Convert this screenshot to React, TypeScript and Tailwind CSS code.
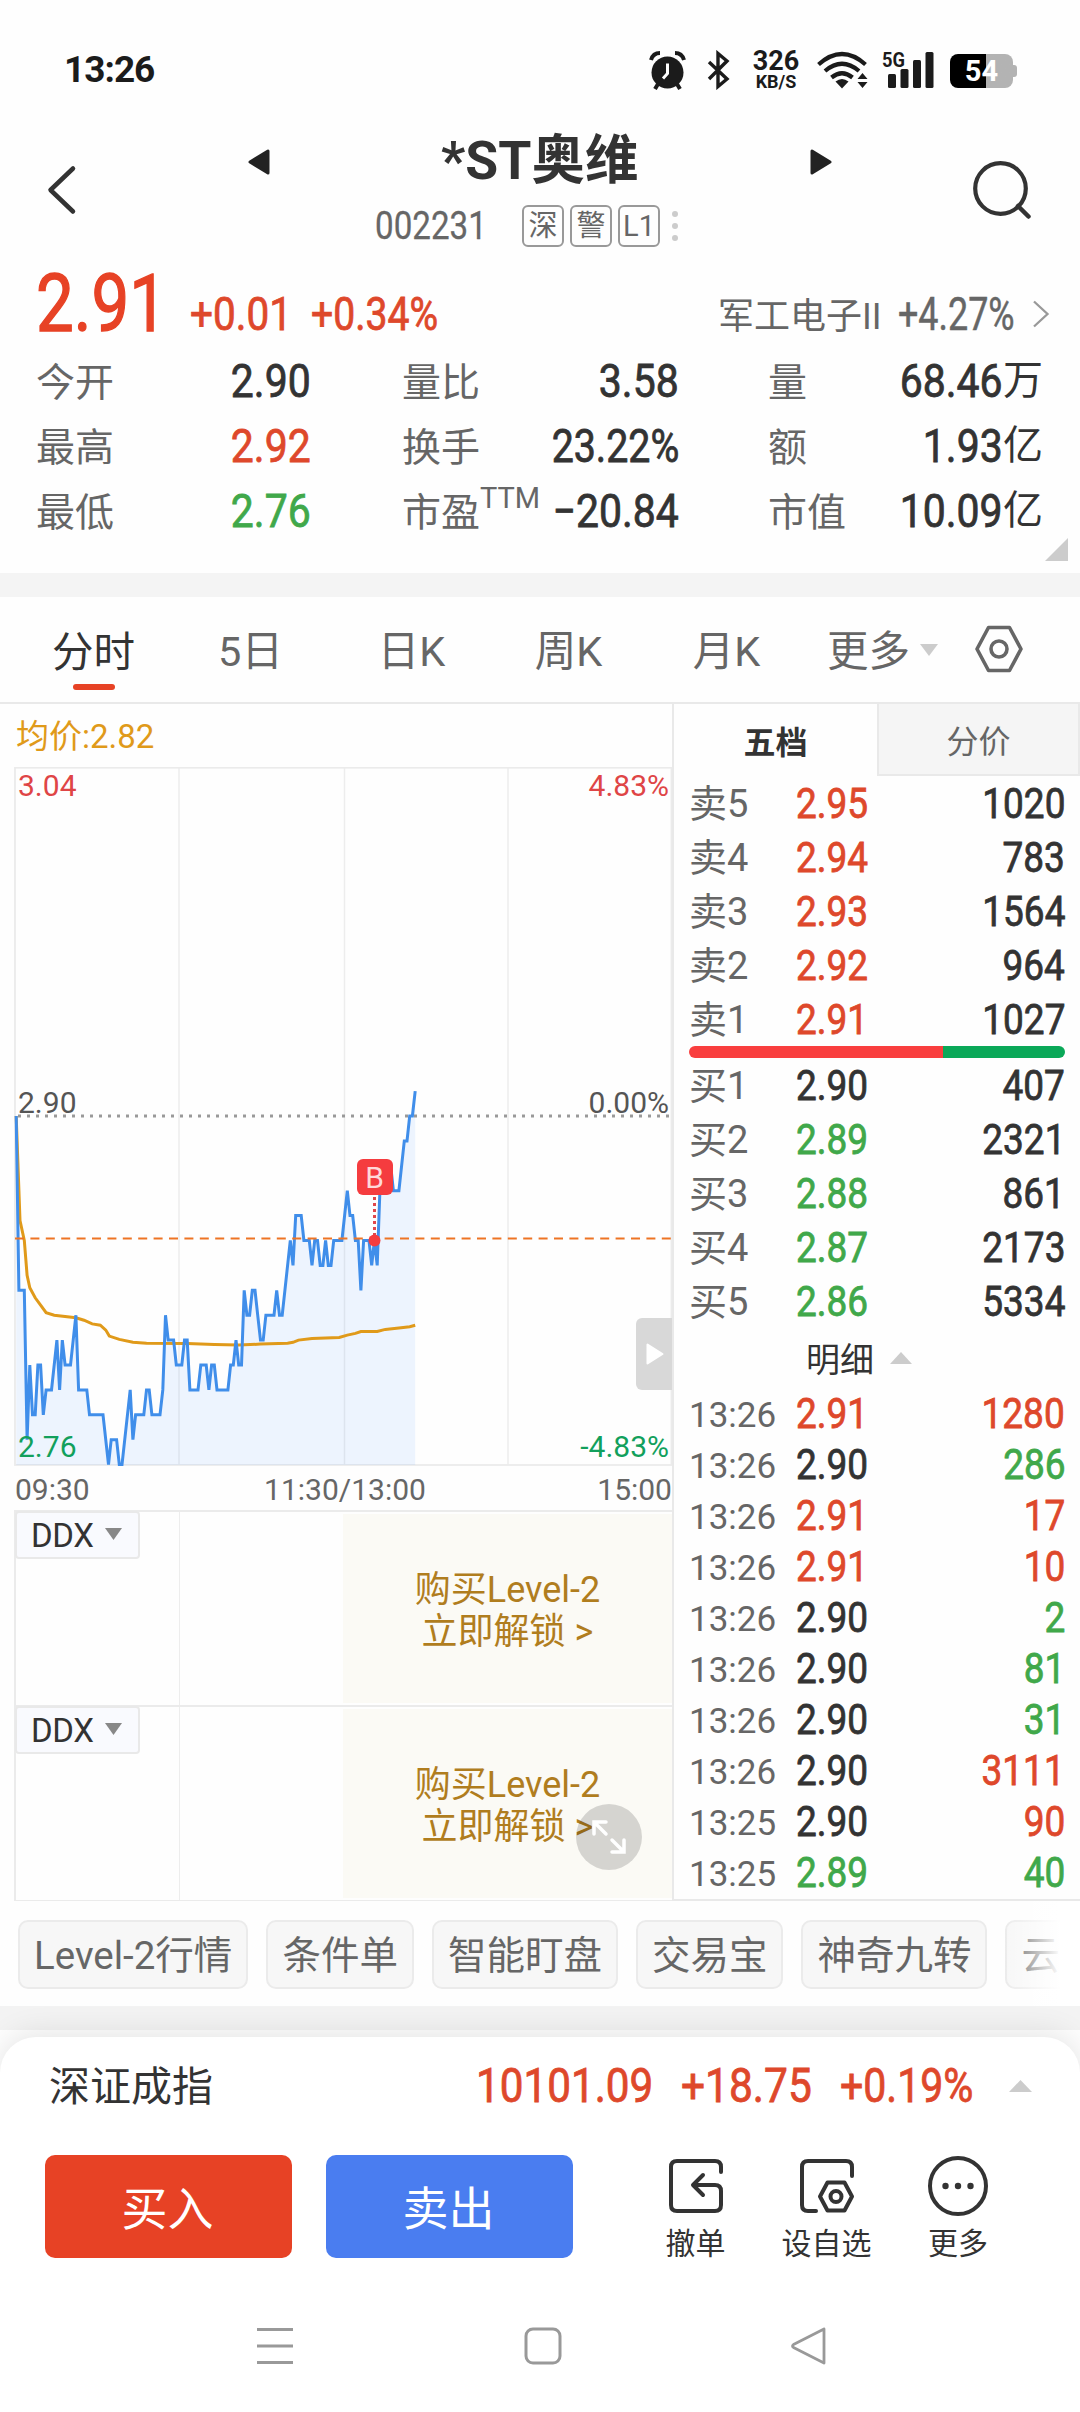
import type { ReactNode } from 'react'
import { clsx } from 'clsx'

type Tone = 'up' | 'down' | 'flat'

const toneClass: Record<Tone, string> = {
  up: 'text-[#de482b]',
  down: 'text-[#40a84a]',
  flat: 'text-[#333333]',
}

const quoteStats: { label: string; value: string; tone?: Tone; unit?: string; sup?: string }[] = [
  { label: '今开', value: '2.90' },
  { label: '量比', value: '3.58' },
  { label: '量', value: '68.46', unit: '万' },
  { label: '最高', value: '2.92', tone: 'up' },
  { label: '换手', value: '23.22%' },
  { label: '额', value: '1.93', unit: '亿' },
  { label: '最低', value: '2.76', tone: 'down' },
  { label: '市盈', value: '−20.84', sup: 'TTM' },
  { label: '市值', value: '10.09', unit: '亿' },
]

const asks: [string, string, number][] = [
  ['卖5', '2.95', 1020],
  ['卖4', '2.94', 783],
  ['卖3', '2.93', 1564],
  ['卖2', '2.92', 964],
  ['卖1', '2.91', 1027],
]

const bids: [string, string, number][] = [
  ['买1', '2.90', 407],
  ['买2', '2.89', 2321],
  ['买3', '2.88', 861],
  ['买4', '2.87', 2173],
  ['买5', '2.86', 5334],
]

const trades: [string, string, number, Tone][] = [
  ['13:26', '2.91', 1280, 'up'],
  ['13:26', '2.90', 286, 'down'],
  ['13:26', '2.91', 17, 'up'],
  ['13:26', '2.91', 10, 'up'],
  ['13:26', '2.90', 2, 'down'],
  ['13:26', '2.90', 81, 'down'],
  ['13:26', '2.90', 31, 'down'],
  ['13:26', '2.90', 3111, 'up'],
  ['13:25', '2.90', 90, 'up'],
  ['13:25', '2.89', 40, 'down'],
]

// [minute, price in cents]
const priceLine: [number, number][] = [
  [0, 290], [1, 283], [3, 283], [4, 277], [5, 280], [6, 278], [7, 278], [8, 280], [9, 280], [10, 278],
  [11, 279], [13, 279], [15, 281], [16, 279], [17, 281], [18, 280], [20, 280], [21, 281], [22, 282], [23, 279],
  [26, 279], [27, 278], [32, 278], [34, 276], [35, 277], [37, 277], [38, 276], [39, 276], [42, 279], [43, 277],
  [44, 278], [47, 278], [48, 279], [49, 279], [50, 278], [53, 278], [54, 279], [55, 282], [56, 281], [58, 281],
  [59, 280], [61, 280], [62, 281], [63, 281], [64, 279], [67, 279], [68, 280], [70, 280], [71, 279], [72, 280],
  [73, 280], [74, 279], [78, 279], [79, 280], [80, 280], [81, 281], [82, 280], [83, 280], [84, 283], [85, 282],
  [86, 282], [87, 283], [88, 283], [89, 282], [90, 281], [91, 281], [92, 282], [95, 282], [96, 283], [97, 282],
  [98, 282], [99, 283], [100, 284], [101, 285], [102, 284], [103, 286], [105, 286], [106, 285], [108, 285],
  [109, 284], [110, 285], [111, 285], [112, 284], [113, 284], [114, 285], [115, 284], [116, 284], [117, 285],
  [120, 285], [121, 286], [122, 287], [123, 286], [124, 286], [125, 285], [126, 285], [127, 283], [128, 285],
  [130, 285], [131, 284], [132, 285], [133, 284], [134, 287], [135, 288], [138, 288], [139, 287], [141, 287],
  [142, 288], [143, 289], [144, 289], [145, 290], [146, 290], [147, 291],
]

const avgLine: [number, number][] = [
  [0, 290], [1.4, 285.8], [3, 285], [4, 283.6], [5, 283.1], [7, 282.7], [9, 282.4], [11, 282.1], [14, 282],
  [22, 281.9], [25, 281.8], [28, 281.65], [31, 281.6], [33, 281.4], [34.3, 281.16], [38, 281.03], [43, 280.91],
  [48, 280.87], [63, 280.86], [73, 280.82], [82, 280.8], [90, 280.84], [100, 280.87], [102, 280.91], [104, 281],
  [109, 281.07], [119, 281.11], [122, 281.2], [125, 281.27], [127, 281.34], [133, 281.35], [136, 281.43],
  [141, 281.49], [145, 281.54], [147, 281.6],
]

const toX = (minute: number) => 2.2 + minute * 2.714
const toY = (cents: number) => 349 + (290 - cents) * 24.9
const toPoints = (line: [number, number][]) => line.map(([m, c]) => `${toX(m).toFixed(1)},${toY(c).toFixed(1)}`).join(' ')

// Narrow numerals, squeezed towards one side so columns stay aligned
function Num({ children, side = 'left', squeeze = 'scale-x-[0.88]', stroke = '[-webkit-text-stroke:0.8px]', className }: {
  children: ReactNode
  side?: 'left' | 'right'
  squeeze?: string
  stroke?: string
  className?: string
}) {
  return (
    <span
      className={clsx(
        'inline-block whitespace-nowrap',
        side === 'left' ? 'origin-left' : 'origin-right',
        squeeze,
        stroke,
        className
      )}
    >
      {children}
    </span>
  )
}

function StatusBar() {
  return (
    <div className="h-[140px] flex items-start text-[#1b1b1b]">
      <div className="w-[649px] pl-[64px] pt-[51px] text-[37px] leading-[38px] font-bold tracking-[-1px]">13:26</div>
      <div className="pt-[50px] flex items-center h-[90px]">
        <svg className="w-[37px] h-[40px]" viewBox="0 0 37 40">
          <circle cx="18.5" cy="22.5" r="16" fill="#1b1b1b" />
          <path d="M2 10Q4 3 11 3M35 10Q33 3 26 3" fill="none" stroke="#1b1b1b" strokeWidth="4" />
          <path d="M9 34l-3 5M28 34l3 5" stroke="#1b1b1b" strokeWidth="4" />
          <path d="M18.5 13.5v10l-4.5 5" fill="none" stroke="#fff" strokeWidth="3" />
        </svg>
        <svg className="ml-[21px] w-[23px] h-[40px]" viewBox="0 0 23 40">
          <path d="M2 12l18 17-9 7.500v-33l9 7.500L2 29" fill="none" stroke="#1b1b1b" strokeWidth="3.4" />
        </svg>
        <div className="ml-[18px] w-[56px] flex flex-col items-center font-bold">
          <div className="text-[27px] leading-[23px]">326</div>
          <div className="text-[18px] leading-[17px]">KB/S</div>
        </div>
        <svg className="ml-[13px] w-[53px] h-[40px]" viewBox="0 0 53 40">
          <g fill="none" stroke="#1b1b1b" strokeWidth="4.2">
            <path d="M1.5 14.5Q25 -6.500 48.5 14.5" />
            <path d="M8 21Q25 6.500 42 21" />
            <path d="M14.5 27.5Q25 19 35.5 27.5" />
          </g>
          <path d="M18.5 31.5q6.5-5 13 0L25 38.5z" fill="#1b1b1b" />
          <path d="M45.5 23l5 6h-10zM45.5 38l5-6h-10z" fill="#1b1b1b" />
        </svg>
        <svg className="ml-[12px] w-[52px] h-[40px]" viewBox="0 0 52 40">
          <text x="0" y="16.5" fontSize="19.5" fontWeight="700" textLength="23" lengthAdjust="spacingAndGlyphs" fill="#1b1b1b">5G</text>
          <rect x="6" y="24" width="8" height="14" rx="1.5" fill="#1b1b1b" />
          <rect x="18.5" y="19" width="8" height="19" rx="1.5" fill="#1b1b1b" />
          <rect x="31" y="10" width="8" height="28" rx="1.5" fill="#1b1b1b" />
          <rect x="43.5" y="2" width="8" height="36" rx="1.5" fill="#1b1b1b" />
        </svg>
        <div className="ml-[16px] mt-[2px] flex items-center">
          <div className="w-[63px] h-[34px] rounded-[8px] bg-linear-to-r from-black from-57% to-[#b3b3b3] to-57% text-white text-[29px] leading-[35px] font-bold text-center">
            54
          </div>
          <div className="w-[4px] h-[12px] rounded-r-[3px] bg-[#b3b3b3]" />
        </div>
      </div>
    </div>
  )
}

function Badge({ children }: { children: ReactNode }) {
  return (
    <div className="size-[42px] border-2 border-[#999] rounded-[6px] flex items-center justify-center text-[29px] leading-none text-[#666]">
      {children}
    </div>
  )
}

function TitleBar() {
  return (
    <div className="h-[120px] flex">
      <div className="w-[248px] pt-[24px] pl-[46px]">
        <svg className="w-[32px] h-[52px]" viewBox="0 0 32 52">
          <path d="M27 4.500L4.500 26 27 47.500" fill="none" stroke="#333" strokeWidth="4.5" strokeLinecap="round" strokeLinejoin="round" />
        </svg>
      </div>
      <svg className="mt-[9px] w-[22px] h-[26px]" viewBox="0 0 22 26">
        <path d="M2 13L20 2v22z" fill="#222" stroke="#222" strokeWidth="3" strokeLinejoin="round" />
      </svg>
      <div className="w-[540px] flex flex-col">
        <div className="h-[65px] pl-[171px] flex items-center text-[53.5px] leading-[56px] font-bold text-[#333] whitespace-nowrap -mt-[12px]">
          *ST奥维
        </div>
        <div className="h-[60px] flex items-center pl-[105px] mt-[3px]">
          <div className="w-[147px] text-[39px] leading-none text-[#666]">
            <Num squeeze="scale-x-[0.85]" stroke="[-webkit-text-stroke:0.3px]">002231</Num>
          </div>
          <div className="flex items-center gap-[6px]">
            <Badge>深</Badge>
            <Badge>警</Badge>
            <Badge>L1</Badge>
          </div>
          <div className="ml-[12px] flex flex-col gap-[6px]">
            <div className="size-[6px] rounded-full bg-[#ccc]" />
            <div className="size-[6px] rounded-full bg-[#ccc]" />
            <div className="size-[6px] rounded-full bg-[#ccc]" />
          </div>
        </div>
      </div>
      <svg className="mt-[9px] w-[22px] h-[26px]" viewBox="0 0 22 26">
        <path d="M20 13L2 2v22z" fill="#222" stroke="#222" strokeWidth="3" strokeLinejoin="round" />
      </svg>
      <svg className="ml-[139px] mt-[18px] w-[62px] h-[62px]" viewBox="0 0 62 62">
        <circle cx="29.5" cy="30.5" r="25.3" fill="none" stroke="#333" strokeWidth="4.2" />
        <path d="M47 48l10.500 10.500" stroke="#333" strokeWidth="4.5" strokeLinecap="round" />
      </svg>
    </div>
  )
}

function QuoteHeader() {
  return (
    <div className="h-[313px] relative">
      <div className="h-[89px] flex">
        <div className="w-[152px] pl-[36px] pt-[4px] text-[80px] leading-[80px] text-[#e74225]">
          <Num squeeze="scale-x-[0.84]" stroke="[-webkit-text-stroke:1.4px]">2.91</Num>
        </div>
        <div className="pl-[38px] w-[122px] pt-[30px] text-[46px] leading-[48px] text-[#de482b]">
          <Num squeeze="scale-x-[0.88]">+0.01</Num>
        </div>
        <div className="pl-[37px] w-[440px] pt-[30px] text-[46px] leading-[48px] text-[#de482b]">
          <Num squeeze="scale-x-[0.85]">+0.34%</Num>
        </div>
        <div className="w-[184px] pt-[38px] pl-[4px] text-[36px] leading-[38px] text-[#666] whitespace-nowrap">军工电子II</div>
        <div className="w-[134px] pt-[30px] text-[46px] leading-[48px] text-[#666]">
          <Num squeeze="scale-x-[0.78]" stroke="[-webkit-text-stroke:0.5px]">+4.27%</Num>
        </div>
        <svg className="mt-[40px] w-[18px] h-[28px]" viewBox="0 0 18 28">
          <path d="M2 1.500L15.500 14 2 26.500" fill="none" stroke="#999" strokeWidth="2.3" />
        </svg>
      </div>
      <div className="grid grid-cols-[275px_368px_364px] pl-[36px]">
        {quoteStats.map(stat => (
          <div key={stat.label} className="h-[65px] flex items-center justify-between text-[39px] leading-none nth-[3n+2]:pl-[91px] nth-[3n]:pl-[89px]">
            <span className="text-[#666] whitespace-nowrap flex items-start pt-[3px]">
              {stat.label}
              {stat.sup && <span className="text-[29px] leading-none -mt-[10px]">{stat.sup}</span>}
            </span>
            <span className={clsx('flex items-center justify-end w-0 -mt-[1px]', toneClass[stat.tone ?? 'flat'])}>
              <Num side="right" squeeze={stat.value.endsWith('%') ? 'scale-x-[0.855]' : 'scale-x-[0.89]'} className="text-[46px]">
                {stat.value}
              </Num>
              {stat.unit && <span className="text-[40px]">{stat.unit}</span>}
            </span>
          </div>
        ))}
      </div>
      <svg className="absolute right-[12px] bottom-[12px] size-[23px]" viewBox="0 0 23 23">
        <path d="M23 0v23H0z" fill="#ccc" />
      </svg>
    </div>
  )
}

function PeriodTabs() {
  return (
    <div className="h-[107px] border-b-2 border-[#e9e9e9] flex items-center text-[41.5px] leading-none text-[#666]">
      <div className="w-[187px] h-full flex flex-col items-center pt-[35px] text-[#333]">
        分时
        <div className="mt-[10px] w-[42px] h-[6px] rounded-full bg-[#e74225]" />
      </div>
      <div className="w-[127px] pt-[5px] text-center">5日</div>
      <div className="w-[195px] pt-[5px] text-center">日K</div>
      <div className="w-[119px] pt-[5px] text-center">周K</div>
      <div className="w-[197px] pt-[5px] text-center">月K</div>
      <div className="w-[84px] pt-[5px] pl-[2px] whitespace-nowrap">更多</div>
      <svg className="ml-[11px] w-[18px] h-[12px]" viewBox="0 0 18 12">
        <path d="M0 0h18L9 12z" fill="#ccc" />
      </svg>
      <svg className="ml-[37px] -mt-[2px] w-[48px] h-[48px]" viewBox="0 0 48 48">
        <path d="M13.5 2.500h21L46 24 34.5 45.500h-21L2 24z" fill="none" stroke="#666" strokeWidth="3.6" strokeLinejoin="round" />
        <circle cx="24" cy="24" r="8" fill="none" stroke="#666" strokeWidth="3.6" />
      </svg>
    </div>
  )
}

function MinuteChart() {
  const area = `${toX(0)},698 ${toPoints(priceLine)} ${toX(147)},698`
  return (
    <div className="relative ml-[14px] h-[699px] text-[30px] leading-[30px]">
      <svg className="block w-[658px] h-[699px]" viewBox="0 0 658 699">
        <path d="M165 0v698M330.500 0v698M494 0v698" stroke="#ededed" strokeWidth="1.5" />
        <rect x="1" y="0.75" width="656.5" height="697.25" fill="none" stroke="#ebebeb" strokeWidth="1.8" />
        <polygon points={area} fill="#3b8cff" fillOpacity="0.085" />
        <path d="M4 349h652" stroke="#999" strokeWidth="3" strokeDasharray="3 6" />
        <polyline points={toPoints(avgLine)} fill="none" stroke="#e09a1a" strokeWidth="3" />
        <polyline points={toPoints(priceLine)} fill="none" stroke="#408eea" strokeWidth="3" />
        <path d="M1 471.5h656" stroke="#ee7424" strokeWidth="2.2" strokeDasharray="9 6.4" />
        <path d="M360.5 430v40" stroke="#e0474c" strokeWidth="3" strokeDasharray="3 3" />
        <circle cx="360.5" cy="473.5" r="6" fill="#f53c3f" />
      </svg>
      <span className="absolute left-[4px] top-[4px] text-[#df4546]">3.04</span>
      <span className="absolute right-[3px] top-[4px] text-[#df4546]">4.83%</span>
      <span className="absolute left-[4px] top-[321px] text-[#555]">2.90</span>
      <span className="absolute right-[3px] top-[321px] text-[#555]">0.00%</span>
      <span className="absolute left-[4px] top-[665px] text-[#12a05c]">2.76</span>
      <span className="absolute right-[3px] top-[665px] text-[#12a05c]">-4.83%</span>
      <span className="absolute left-[342.5px] top-[392px] size-[36px] rounded-[6px] bg-[#f53c3f] text-[#ffd9da] leading-[38px] text-center">B</span>
      <div className="absolute right-0 top-[551px] w-[36px] h-[72px] rounded-l-[6px] bg-[#d8d8d8] flex items-center pl-[10px]">
        <svg className="w-[18px] h-[22px]" viewBox="0 0 18 22">
          <path d="M1.500 1.500v19L16.500 11z" fill="#fff" stroke="#fff" strokeWidth="2" strokeLinejoin="round" />
        </svg>
      </div>
    </div>
  )
}

function DdxPanel({ children }: { children?: ReactNode }) {
  return (
    <div className="relative ml-[14px] h-[195px] flex border-l-2 border-t-2 border-[#ebebeb]">
      <div className="w-[164px] border-r border-[#ededed]">
        <div className="w-[125px] h-[48px] -mt-px -ml-px border-2 border-[#e9e9e9] rounded-[4px] bg-[#f9fafe] flex items-center pl-[14px] text-[33px] leading-none text-[#333]">
          <span className="tracking-[-0.3px]">DDX</span>
          <svg className="ml-[11px] -mt-[2px] w-[17px] h-[12px]" viewBox="0 0 17 12">
            <path d="M0 0h17L8.500 12z" fill="#888" />
          </svg>
        </div>
      </div>
      <div className="w-[163px]" />
      <div className="w-[329px] my-[2px] bg-[#fbfaf5] flex flex-col items-center justify-center text-[36px] leading-[42px] text-[#b07d1e]">
        <div className="mt-[4px]">购买Level-2</div>
        <div>立即解锁 &gt;</div>
      </div>
      {children}
    </div>
  )
}

function BookRow({ label, price, volume, tone }: { label: string; price: string; volume: number; tone: Tone }) {
  return (
    <div className="h-[54px] flex items-center pt-[1px]">
      <div className="w-[107px] text-[38px] leading-none text-[#666]">{label}</div>
      <Num className={clsx('text-[42px] leading-none', toneClass[tone])}>{price}</Num>
      <Num side="right" className="ml-auto text-[42px] leading-none text-[#333]">{volume}</Num>
    </div>
  )
}

function OrderBook() {
  return (
    <div className="w-[408px] h-[1197px] border-l-2 border-b-2 border-[#e9e9e9] flex flex-col">
      <div className="h-[72px] flex text-[32px] leading-none">
        <div className="w-[203px] flex items-center justify-center font-bold text-[#333] pt-[5px]">五档</div>
        <div className="flex-1 flex items-center justify-center border-2 border-t-0 border-[#e9e9e9] bg-[#f5f5f5] text-[#666] pt-[6px]">分价</div>
      </div>
      <div className="pl-[15px] pr-[15px]">
        {asks.map(([label, price, volume]) => (
          <BookRow key={label} label={label} price={price} volume={volume} tone="up" />
        ))}
        <div className="h-[12px] w-[376px] rounded-full overflow-hidden flex">
          <div className="w-[254px] bg-[#f93e3e]" />
          <div className="flex-1 bg-[#0aa858]" />
        </div>
        {bids.map(([label, price, volume]) => (
          <BookRow key={label} label={label} price={price} volume={volume} tone={price === '2.90' ? 'flat' : 'down'} />
        ))}
        <div className="h-[60px] pt-[3px] flex items-center pl-[117px] text-[34px] leading-none text-[#333]">
          明细
          <svg className="ml-[16px] -mt-[3px] w-[22px] h-[12px]" viewBox="0 0 22 12">
            <path d="M0 12h22L11 0z" fill="#ccc" />
          </svg>
        </div>
        {trades.map(([time, price, volume, tone], i) => (
          <div key={i} className="h-[51px] flex items-center">
            <div className="w-[107px] pt-[4px] text-[35px] leading-none text-[#666]">{time}</div>
            <Num squeeze="scale-x-[0.86]" className={clsx('text-[43px] leading-none', toneClass[price === '2.91' ? 'up' : price === '2.90' ? 'flat' : 'down'])}>
              {price}
            </Num>
            <Num side="right" squeeze="scale-x-[0.86]" className={clsx('ml-auto text-[43px] leading-none', toneClass[tone])}>{volume}</Num>
          </div>
        ))}
      </div>
    </div>
  )
}

function ShortcutChips() {
  const chips = ['Level-2行情', '条件单', '智能盯盘', '交易宝', '神奇九转', '云']
  return (
    <div className="relative h-[105px] pt-[19px] pl-[18px] pr-[20px] overflow-hidden">
      <div className="flex gap-[18px] overflow-hidden">
        {chips.map(chip => (
          <div
            key={chip}
            className="shrink-0 min-w-[90px] h-[69px] px-[14px] pt-[3px] flex items-center rounded-[10px] border-2 border-[#ebebeb] bg-[#f7f7f7] text-[38.5px] leading-none text-[#666] whitespace-nowrap"
          >
            {chip}
          </div>
        ))}
      </div>
      <div className="absolute right-0 top-0 h-full w-[76px] bg-linear-to-r from-white/0 to-white to-75%" />
    </div>
  )
}

function ActionIcon({ label, width, children }: { label: string; width: string; children: ReactNode }) {
  return (
    <div className={clsx('flex flex-col items-center', width)}>
      <svg className="size-[62px]" viewBox="0 0 62 62" fill="none" stroke="#333" strokeWidth="4" strokeLinecap="round" strokeLinejoin="round">
        {children}
      </svg>
      <div className="mt-[11px] text-[30px] leading-[32px] text-[#333] whitespace-nowrap">{label}</div>
    </div>
  )
}

function BottomBar() {
  return (
    <div className="-mt-[1px] h-[375px] rounded-t-[36px] bg-white shadow-[0_-4px_30px_rgba(0,0,0,0.1)] relative">
      <div className="h-[100px] pl-[49px] flex items-center leading-none">
        <div className="w-[427px] text-[41px] text-[#333]">深证成指</div>
        <div className="w-[205px] pb-[2px] text-[48px] text-[#de482b]"><Num squeeze="scale-x-[0.88]">10101.09</Num></div>
        <div className="w-[159px] pb-[2px] text-[48px] text-[#de482b]"><Num squeeze="scale-x-[0.885]">+18.75</Num></div>
        <div className="w-[169px] pb-[2px] text-[48px] text-[#de482b]"><Num squeeze="scale-x-[0.855]">+0.19%</Num></div>
        <svg className="-mt-[3px] w-[23px] h-[12px]" viewBox="0 0 23 12">
          <path d="M0 12h23L11.500 0z" fill="#ccc" />
        </svg>
      </div>
      <div className="h-[150px] pt-[18px] pl-[45px] flex items-start">
        <button className="w-[247px] h-[103px] rounded-[10px] bg-[#e74225] text-white text-[46px] leading-none pt-[4px] pr-[2px]">买入</button>
        <button className="ml-[34px] w-[247px] h-[103px] rounded-[10px] bg-[#4a7df0] text-white text-[46px] leading-none pt-[4px] pr-[2px]">卖出</button>
        <div className="ml-[57px] flex">
          <ActionIcon label="撤单" width="w-[131px]">
            <path d="M56 17v-5q0-6-6-6H12q-6 0-6 6v38q0 6 6 6h38q6 0 6-6V36q0-6-6-6H29M38 20L28 30l10 10" />
          </ActionIcon>
          <ActionIcon label="设自选" width="w-[131px]">
            <path d="M56 21v-9q0-6-6-6H12q-6 0-6 6v38q0 6 6 6h8" />
            <path d="M31.500 27.500h17L56 41.500l-7.500 14h-17L24 41.500z" />
            <circle cx="40" cy="41.5" r="5.5" />
          </ActionIcon>
          <ActionIcon label="更多" width="w-[132px]">
            <circle cx="31" cy="31" r="28" />
            <g fill="#333" stroke="none">
              <circle cx="18.5" cy="31" r="3.2" />
              <circle cx="31" cy="31" r="3.2" />
              <circle cx="43.5" cy="31" r="3.2" />
            </g>
          </ActionIcon>
        </div>
      </div>
      <div className="h-[118px] flex items-center">
        <svg className="ml-[256px] size-[38px]" viewBox="0 0 38 38">
          <path d="M1 2.500h36M1 19h36M1 35.500h36" stroke="#999" strokeWidth="3" />
        </svg>
        <svg className="ml-[230px] size-[38px]" viewBox="0 0 38 38">
          <rect x="2" y="2" width="34" height="34" rx="7" fill="none" stroke="#999" strokeWidth="3" />
        </svg>
        <svg className="ml-[228px] size-[38px]" viewBox="0 0 38 38">
          <path d="M34 2L3.500 17.500Q1.500 19 3.500 20.500L34 36z" fill="none" stroke="#999" strokeWidth="2.8" strokeLinejoin="round" />
        </svg>
      </div>
    </div>
  )
}

export default function App() {
  return (
    <div className="w-[1080px] h-[2412px] overflow-hidden bg-[#fefefe] font-['Roboto','Noto_Sans_CJK_SC',sans-serif]">
      <StatusBar />
      <TitleBar />
      <QuoteHeader />
      <div className="h-[24px] bg-[#f4f4f4]" />
      <PeriodTabs />
      <div className="flex h-[1197px]">
        <div className="w-[672px] flex flex-col">
          <div className="h-[63px] pl-[16px] pt-[2px] flex items-center text-[33px] leading-none text-[#e09a1a]">均价:2.82</div>
          <MinuteChart />
          <div className="h-[44px] ml-[14px] pl-[1px] pt-[4px] flex items-center justify-between text-[30px] leading-none text-[#666]">
            <span>09:30</span>
            <span className="pl-[3px]">11:30/13:00</span>
            <span>15:00</span>
          </div>
          <DdxPanel />
          <DdxPanel>
            <div className="absolute right-[30px] top-[97px] size-[66px] rounded-full bg-black/15 flex items-center justify-center">
              <svg className="size-[40px]" viewBox="0 0 40 40" fill="none" stroke="#fff" strokeWidth="3.5" strokeLinecap="round">
                <path d="M5 17V5h12M6 6l11 11M35 23v12H23M34 34L23 23" />
              </svg>
            </div>
          </DdxPanel>
          <div className="ml-[14px] h-px bg-[#ebebeb]" />
        </div>
        <OrderBook />
      </div>
      <ShortcutChips />
      <div className="h-[24px] bg-[#f3f3f3]" />
      <div className="h-[8px]" />
      <BottomBar />
    </div>
  )
}
